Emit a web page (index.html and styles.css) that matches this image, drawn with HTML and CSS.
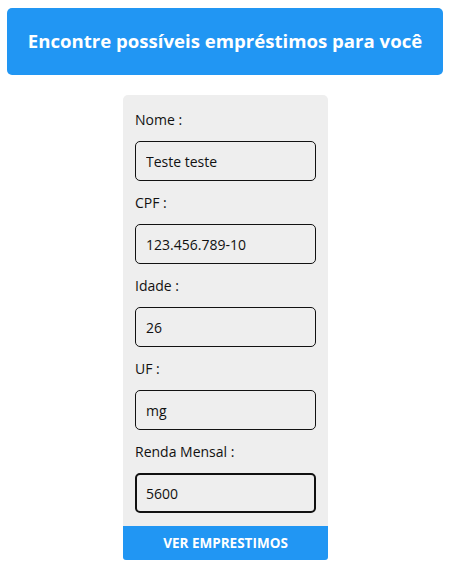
FILE: index.html
```html
<!DOCTYPE html>
<html lang="pt-BR">
<head>
<meta charset="utf-8">
<title>Empréstimos</title>
<link rel="stylesheet" href="styles.css">
</head>
<body>
<header class="banner">
  <h1 class="banner-title">Encontre possíveis empréstimos para você</h1>
</header>
<main class="wrap">
  <form class="card">
    <div class="fields">
      <label class="field">
        <span class="field-label">Nome :</span>
        <input class="field-input" type="text" value="Teste teste">
      </label>
      <label class="field">
        <span class="field-label">CPF :</span>
        <input class="field-input" type="text" value="123.456.789-10">
      </label>
      <label class="field">
        <span class="field-label">Idade :</span>
        <input class="field-input" type="text" value="26">
      </label>
      <label class="field">
        <span class="field-label">UF :</span>
        <input class="field-input" type="text" value="mg">
      </label>
      <label class="field">
        <span class="field-label">Renda Mensal :</span>
        <input class="field-input field-input--focus" type="text" value="5600">
      </label>
    </div>
    <button class="submit" type="button">VER EMPRESTIMOS</button>
  </form>
</main>
</body>
</html>
```
FILE: styles.css
```css
* { box-sizing: border-box; }
body {
  margin: 0;
  padding: 8px 6px 0 7px;
  font-family: "Open Sans", "Noto Sans", sans-serif;
  background: #fff;
  color: #111;
}
.banner {
  height: 67px;
  background: #2196f3;
  border-radius: 5px;
  display: flex;
  align-items: center;
  justify-content: center;
}
.banner-title {
  margin: 0;
  color: #fff;
  font-size: 18.6px;
  font-weight: 700;
  line-height: 1;
}
.wrap {
  display: flex;
  justify-content: center;
  padding-top: 20px;
  padding-left: 1px;
}
.card {
  width: 205px;
  display: flex;
  flex-direction: column;
}
.fields {
  background: #eeeeee;
  border-radius: 5px 5px 0 0;
  padding: 15px 12px 1px 12px;
  display: flex;
  flex-direction: column;
}
.field {
  display: flex;
  flex-direction: column;
  margin-bottom: 12px;
}
.field-label {
  font-size: 14px;
  line-height: 20px;
  height: 20px;
  margin-bottom: 11px;
  color: #111;
}
.field-input {
  height: 40px;
  width: 181px;
  border: 1px solid #111;
  border-radius: 5px;
  background: transparent;
  font-family: inherit;
  font-size: 14px;
  color: #111;
  padding: 0 10px;
  outline: none;
}
.field-input--focus {
  border: 2px solid #111;
  padding: 0 9px;
}
.submit {
  height: 34px;
  border: none;
  border-radius: 0 0 3px 3px;
  background: #2196f3;
  color: #fff;
  font-family: inherit;
  font-size: 13.5px;
  font-weight: 700;
  cursor: pointer;
}
```
